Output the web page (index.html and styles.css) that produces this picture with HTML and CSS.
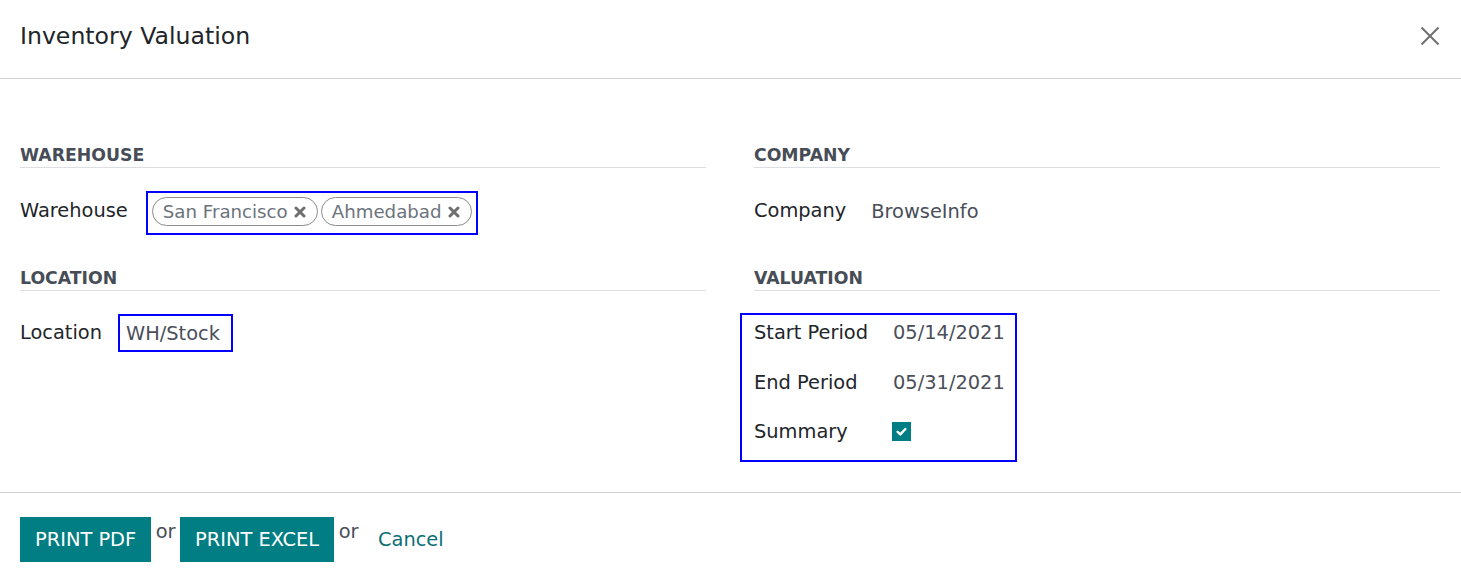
FILE: index.html
```html
<!DOCTYPE html>
<html lang="en">
<head>
<meta charset="utf-8">
<title>Inventory Valuation</title>
<link rel="stylesheet" href="styles.css">
</head>
<body>
<div class="modal">
  <header class="modal-header">
    <h4 class="modal-title">Inventory Valuation</h4>
    <button class="close" aria-label="Close">
      <svg width="20" height="20" viewBox="0 0 20 20"><path d="M1.5 1.5 L18.5 18.5 M18.5 1.5 L1.5 18.5" stroke="#707070" stroke-width="2" fill="none"/></svg>
    </button>
  </header>
  <main class="modal-body">
    <div class="group-title">WAREHOUSE</div>
    <div class="group-title">COMPANY</div>

    <div class="field-row warehouse-row">
      <span class="label label-top">Warehouse</span>
      <div class="tags-box">
        <span class="tag">San Francisco
          <svg class="tag-x" width="12" height="12" viewBox="0 0 12 12"><path d="M2 2 L10 10 M10 2 L2 10" stroke="#6f6f6f" stroke-width="3" stroke-linecap="round" fill="none"/></svg>
        </span>
        <span class="tag">Ahmedabad
          <svg class="tag-x" width="12" height="12" viewBox="0 0 12 12"><path d="M2 2 L10 10 M10 2 L2 10" stroke="#6f6f6f" stroke-width="3" stroke-linecap="round" fill="none"/></svg>
        </span>
      </div>
    </div>
    <div class="kv-grid company-grid">
      <span class="label">Company</span>
      <span class="value value-low">BrowseInfo</span>
    </div>

    <div class="group-title group-title-2">LOCATION</div>
    <div class="group-title group-title-2">VALUATION</div>

    <div class="field-row location-row">
      <span class="label">Location</span>
      <div class="location-box">WH/Stock</div>
    </div>
    <div class="valuation-box">
      <div class="kv-grid valuation-grid">
        <span class="label">Start Period</span>
        <span class="value">05/14/2021</span>
        <span class="label">End Period</span>
        <span class="value">05/31/2021</span>
        <span class="label">Summary</span>
        <span class="value check-cell">
          <span class="checkbox">
            <svg width="19" height="19" viewBox="0 0 19 19"><path d="M5.6 9.9 L8.3 12.4 L13.4 7" stroke="#ffffff" stroke-width="2.4" fill="none" stroke-linecap="round" stroke-linejoin="round"/></svg>
          </span>
        </span>
      </div>
    </div>
  </main>
  <footer class="modal-footer">
    <button class="btn btn-primary">PRINT PDF</button>
    <span class="or">or</span>
    <button class="btn btn-primary">PRINT EXCEL</button>
    <span class="or">or</span>
    <a class="btn-link" href="#">Cancel</a>
  </footer>
</div>
</body>
</html>
```

FILE: styles.css
```css
* { box-sizing: border-box; }

html, body {
  margin: 0;
  padding: 0;
  background: #ffffff;
  overflow: hidden;
}

body {
  font-family: "DejaVu Sans", "Noto Sans", sans-serif;
  font-size: 19.4px;
  color: #212529;
}

.modal-header {
  display: flex;
  justify-content: space-between;
  align-items: center;
  padding: 22px 21px 28px 20px;
  border-bottom: 1px solid #cfd0d6;
}

.modal-title {
  margin: 0;
  font-size: 23.6px;
  font-weight: normal;
  line-height: 28px;
  color: #212529;
}

.close {
  display: flex;
  padding: 0;
  margin: 0;
  border: none;
  background: none;
}

.modal-body {
  display: grid;
  grid-template-columns: 686px 686px;
  column-gap: 48px;
  align-items: start;
  padding: 64px 21px 30px 20px;
}

.group-title {
  font-size: 17.3px;
  font-weight: bold;
  line-height: 24px;
  color: #474d57;
  padding-bottom: 0;
  border-bottom: 1px solid #dcdee2;
}

.group-title-2 {
  margin-top: 31px;
}

.label {
  line-height: 28px;
  color: #212529;
  white-space: nowrap;
}

.value {
  line-height: 28px;
  color: #4a4f59;
  white-space: nowrap;
}

.value-low {
  padding-top: 1px;
}

.field-row {
  display: flex;
}

.warehouse-row {
  margin-top: 23px;
  align-items: flex-start;
}

.label-top {
  margin-top: 5.5px;
  margin-right: 18px;
}

.tags-box {
  display: flex;
  gap: 3px;
  padding: 4px 4px 7px 4px;
  border: 2px solid #0000ff;
}

.tag {
  display: inline-flex;
  align-items: center;
  gap: 6px;
  height: 29px;
  padding: 0 11px 0 10px;
  border: 1px solid #8a8a8a;
  border-radius: 15px;
  font-size: 18.2px;
  color: #6c737b;
  white-space: nowrap;
}

.tag-x {
  display: block;
}

.kv-grid {
  display: grid;
  grid-template-columns: auto auto;
  justify-content: start;
  column-gap: 25px;
}

.company-grid {
  margin-top: 28.5px;
}

.location-row {
  margin-top: 23px;
  align-items: center;
}

.location-row .label {
  margin-right: 16px;
}

.location-box {
  height: 38px;
  line-height: 35px;
  padding: 0 11px 0 6px;
  border: 2px solid #0000ff;
  color: #4a4f59;
}

.valuation-box {
  justify-self: start;
  margin-top: 22px;
  margin-left: -14px;
  padding: 0 10px 11px 12px;
  border: 2px solid #0000ff;
}

.valuation-grid {
  row-gap: 14.5px;
  grid-auto-rows: 35px;
  align-items: center;
}

.valuation-grid .label,
.valuation-grid .value {
  padding-top: 1px;
}

.check-cell {
  display: flex;
  align-items: center;
}

.valuation-grid .check-cell {
  padding-top: 0;
  margin-left: -1px;
}

.checkbox {
  display: block;
  width: 19px;
  height: 19px;
  background: #017e84;
}

.checkbox svg {
  display: block;
}

.modal-footer {
  display: flex;
  align-items: flex-start;
  padding: 24px 20px 20px 20px;
  border-top: 1px solid #cfd0d6;
}

.btn {
  height: 45px;
  padding: 0 15px;
  margin: 0;
  border: none;
  border-radius: 0;
  font-family: "DejaVu Sans", "Noto Sans", sans-serif;
  font-size: 19.4px;
  line-height: 45px;
  cursor: pointer;
}

.btn-primary {
  background: #017e84;
  color: #ffffff;
}

.or {
  line-height: 29px;
  margin: 0 4.5px;
  color: #4a4f59;
}

.btn-link {
  margin-left: 15px;
  line-height: 45px;
  color: #0b6f76;
  text-decoration: none;
}
```
